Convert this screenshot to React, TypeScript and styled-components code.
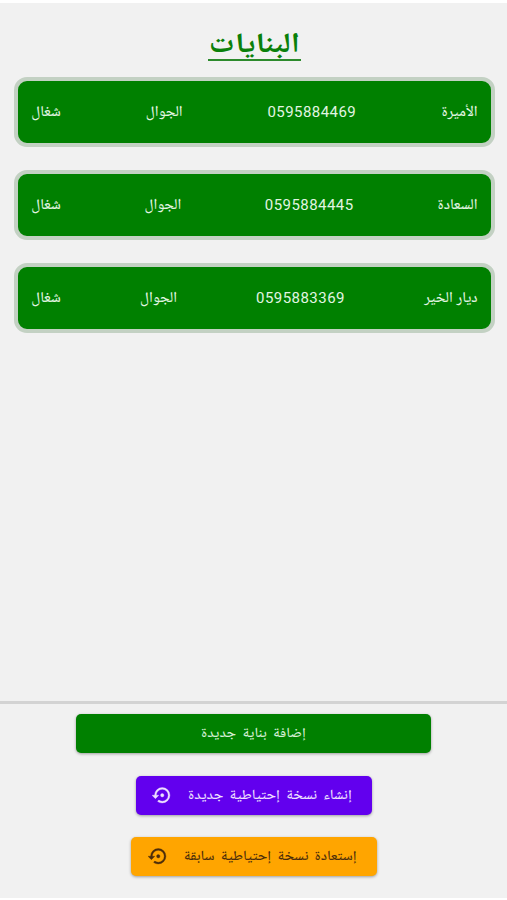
import React from "react";
import styled, { createGlobalStyle } from "styled-components";

const GlobalStyle = createGlobalStyle`
  * { box-sizing: border-box; }
  body {
    margin: 0;
    background: #fff;
    font-family: Roboto, "Noto Naskh Arabic UI", "Noto Naskh Arabic", "Noto Sans Arabic", "DejaVu Sans", sans-serif;
  }
`;

const Screen = styled.div`
  display: flex;
  flex-direction: column;
  width: 507px;
  height: 900px;
  border-top: 3px solid #fff;
  border-bottom: 2px solid #fff;
  background: #f1f1f1;
`;

const Title = styled.h1`
  align-self: center;
  width: 93px;
  height: 34px;
  margin: 24px 0 0 1px;
  border-bottom: 2px solid #2c8a2c;
  display: flex;
  justify-content: center;
  color: #0a800a;
  font-size: 28px;
  font-weight: 700;
  line-height: 39px;
  white-space: nowrap;
`;

const TitleText = styled.span`
  transform: scaleX(1.16);
`;

const List = styled.main`
  flex: 1;
  display: flex;
  flex-direction: column;
  gap: 23px;
  padding: 16px 12px 0 14px;
`;

const Card = styled.article`
  display: flex;
  align-items: center;
  justify-content: space-between;
  height: 70px;
  padding: 0 13px;
  border: 4px solid #c3d1c3;
  border-radius: 13px;
  background: #008000;
  color: #e2f5e2;
`;

const Cell = styled.span<{ $width: number }>`
  display: flex;
  justify-content: center;
  width: ${(p) => p.$width}px;
  padding-top: 1px;
  font-size: 15px;
  font-weight: 500;
  line-height: 20px;
  white-space: nowrap;
`;

const Phone = styled(Cell)`
  padding-top: 0;
  font-size: 15px;
  font-weight: 400;
  letter-spacing: 0.45px;
`;

const Footer = styled.footer`
  display: flex;
  flex-direction: column;
  align-items: center;
  gap: 22.5px;
  height: 197px;
  padding-top: 10px;
  border-top: 3px solid #d3d3d3;
`;

const Button = styled.button<{ $width: number; $bg: string; $fg: string }>`
  display: flex;
  align-items: center;
  justify-content: center;
  gap: 15.5px;
  width: ${(p) => p.$width}px;
  height: 39px;
  padding: 0;
  border: 0;
  border-radius: 5px;
  background: ${(p) => p.$bg};
  color: ${(p) => p.$fg};
  box-shadow: 0 1px 3px rgba(0, 0, 0, 0.35);
  font-family: inherit;
  font-size: 14px;
  font-weight: 500;
`;

const IconButton = styled(Button)`
  padding-right: 4px;
`;

const Label = styled.span<{ $width: number }>`
  display: flex;
  justify-content: center;
  width: ${(p) => p.$width}px;
  padding-top: 1px;
  line-height: 20px;
  word-spacing: 2.2px;
  white-space: nowrap;
  transform: scaleX(1.065);
`;

const RestoreIcon = () => (
  <svg width="20.5" height="20.5" viewBox="0 0 24 24" fill="currentColor" stroke="currentColor" strokeWidth="0.4">
    <path d="M12,3A9,9 0 0,0 3,12H0L4,16L8,12H5A7,7 0 0,1 12,5A7,7 0 0,1 19,12A7,7 0 0,1 12,19C10.5,19 9.09,18.5 7.94,17.7L6.5,19.14C8.04,20.3 9.94,21 12,21A9,9 0 0,0 21,12A9,9 0 0,0 12,3M14,12A2,2 0 0,0 12,10A2,2 0 0,0 10,12A2,2 0 0,0 12,14A2,2 0 0,0 14,12Z" />
  </svg>
);

const buildings = [
  { name: "الأميرة", width: 37, phone: "0595884469" },
  { name: "السعادة", width: 41, phone: "0595884445" },
  { name: "ديار الخير", width: 54, phone: "0595883369" },
];

export default function App() {
  return (
    <>
      <GlobalStyle />
      <Screen>
        <Title dir="rtl">
          <TitleText>البنايات</TitleText>
        </Title>
        <List>
          {buildings.map((b) => (
            <Card key={b.phone} dir="rtl">
              <Cell $width={b.width}>{b.name}</Cell>
              <Phone $width={89}>{b.phone}</Phone>
              <Cell $width={37}>الجوال</Cell>
              <Cell $width={30}>شغال</Cell>
            </Card>
          ))}
        </List>
        <Footer>
          <Button $width={355} $bg="#008000" $fg="#d5efd5">
            <Label $width={105} dir="rtl">إضافة بناية جديدة</Label>
          </Button>
          <IconButton $width={236} $bg="#6200ee" $fg="#eee0ff">
            <RestoreIcon />
            <Label $width={164} dir="rtl">إنشاء نسخة إحتياطية جديدة</Label>
          </IconButton>
          <IconButton $width={246} $bg="#ffa500" $fg="#4b2c0b">
            <RestoreIcon />
            <Label $width={172} dir="rtl">إستعادة نسخة إحتياطية سابقة</Label>
          </IconButton>
        </Footer>
      </Screen>
    </>
  );
}
